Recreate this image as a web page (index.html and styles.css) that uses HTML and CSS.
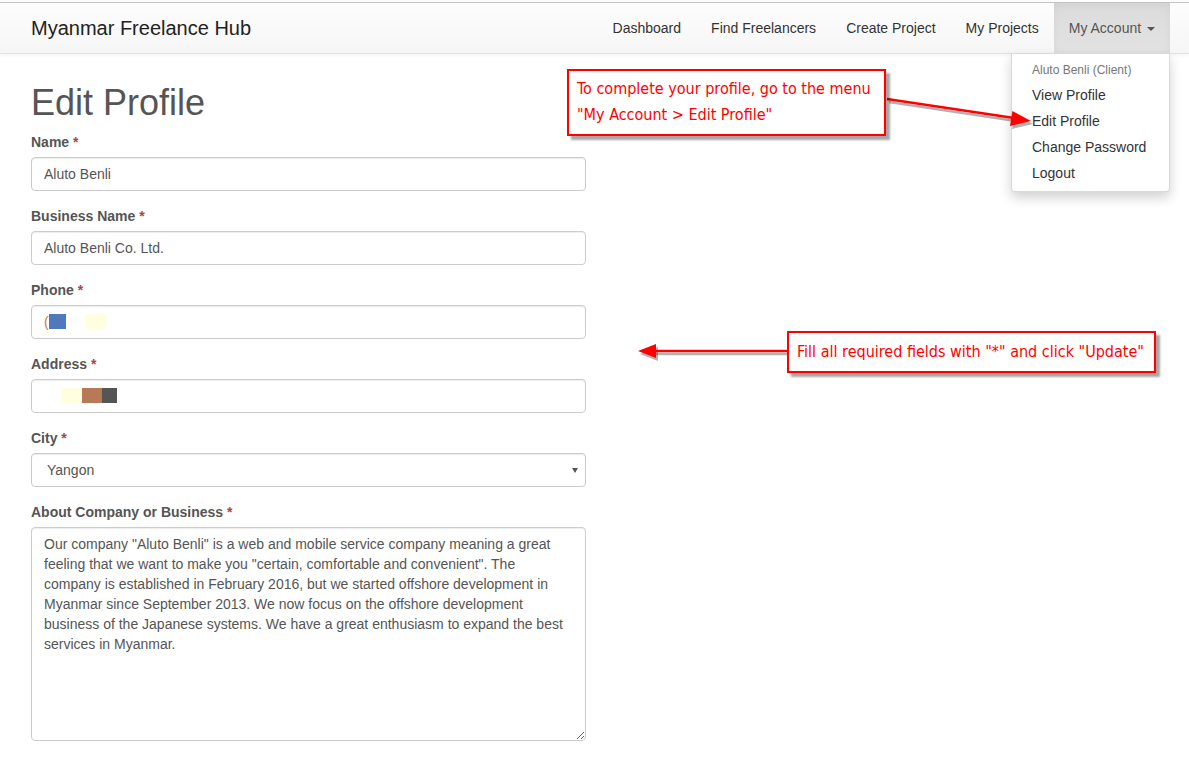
FILE: index.html
```html
<!DOCTYPE html>
<html lang="en">
<head>
<meta charset="utf-8">
<title>Edit Profile - Myanmar Freelance Hub</title>
<link rel="stylesheet" href="styles.css">
</head>
<body>
<nav class="navbar">
  <a class="brand" href="#">Myanmar Freelance Hub</a>
  <ul class="nav">
    <li><a href="#">Dashboard</a></li>
    <li><a href="#">Find Freelancers</a></li>
    <li><a href="#">Create Project</a></li>
    <li><a href="#">My Projects</a></li>
    <li class="dropdown">
      <a href="#" class="active">My Account <span class="caret"></span></a>
      <ul class="dropdown-menu">
        <li class="dropdown-header">Aluto Benli (Client)</li>
        <li><a href="#">View Profile</a></li>
        <li><a href="#">Edit Profile</a></li>
        <li><a href="#">Change Password</a></li>
        <li><a href="#">Logout</a></li>
      </ul>
    </li>
  </ul>
</nav>

<main class="container">
  <h1>Edit Profile</h1>
  <form class="profile-form">
    <div class="form-group">
      <label>Name <span class="req">*</span></label>
      <input class="form-control" type="text" value="Aluto Benli">
    </div>
    <div class="form-group">
      <label>Business Name <span class="req">*</span></label>
      <input class="form-control" type="text" value="Aluto Benli Co. Ltd.">
    </div>
    <div class="form-group">
      <label>Phone <span class="req">*</span></label>
      <div class="form-control redacted">
        <span class="paren">(</span><span class="blk blue"></span><span class="blk gap"></span><span class="blk cream"></span>
      </div>
    </div>
    <div class="form-group">
      <label>Address <span class="req">*</span></label>
      <div class="form-control redacted">
        <span class="blk lead"></span><span class="blk cream"></span><span class="blk brown"></span><span class="blk dark"></span>
      </div>
    </div>
    <div class="form-group">
      <label>City <span class="req">*</span></label>
      <div class="select-wrap">
        <select class="form-control select">
          <option>Yangon</option>
          <option>Mandalay</option>
          <option>Naypyidaw</option>
        </select>
      </div>
    </div>
    <div class="form-group">
      <label>About Company or Business <span class="req">*</span></label>
      <textarea class="form-control about">Our company "Aluto Benli" is a web and mobile service company meaning a great feeling that we want to make you "certain, comfortable and convenient". The company is established in February 2016, but we started offshore development in Myanmar since September 2013. We now focus on the offshore development business of the Japanese systems. We have a great enthusiasm to expand the best services in Myanmar.</textarea>
    </div>
  </form>
</main>

<svg class="annotations" width="1189" height="757" viewBox="0 0 1189 757" aria-hidden="true">
  <g class="shadow" transform="translate(2,3)">
    <line x1="887" y1="99" x2="1014" y2="118" stroke-width="2.5"/>
    <polygon points="1031,121 1012.4,111 1010,126"/>
    <line x1="787" y1="351" x2="652" y2="351" stroke-width="2.5"/>
    <polygon points="638,351 656,344 656,358"/>
  </g>
  <g class="arrow">
    <line x1="887" y1="99" x2="1014" y2="118" stroke-width="2.5"/>
    <polygon points="1031,121 1012.4,111 1010,126"/>
    <line x1="787" y1="351" x2="652" y2="351" stroke-width="2.5"/>
    <polygon points="638,351 656,344 656,358"/>
  </g>
</svg>

<div class="callout callout-menu">To complete your profile, go to the menu<br>"My Account &gt; Edit Profile"</div>
<div class="callout callout-fill">Fill all required fields with "*" and click "Update"</div>
</body>
</html>
```

FILE: styles.css
```css
* { box-sizing: border-box; }

html { overflow: hidden; }

body {
  margin: 0;
  padding-top: 2px;
  position: relative;
  font-family: "Liberation Sans", Arial, sans-serif;
  font-size: 14px;
  line-height: 20px;
  color: #333;
  background: #fff;
}

a { text-decoration: none; }

/* Navbar */
.navbar {
  display: flex;
  justify-content: space-between;
  height: 52px;
  padding: 0 19px 0 16px;
  border-top: 1px solid #c4c4c4;
  border-bottom: 1px solid #e2e2e2;
  background: linear-gradient(#fdfdfd, #f6f6f6);
  box-shadow: 0 1px 4px rgba(0, 0, 0, .06);
}

.brand {
  padding: 0 15px;
  line-height: 50px;
  font-size: 20px;
  color: #222;
}

.nav {
  display: flex;
  margin: 0;
  padding: 0;
  list-style: none;
}

.nav > li { position: relative; }

.nav > li > a {
  display: block;
  padding: 15px 15px;
  line-height: 20px;
  color: #333;
}

.nav > li > a.active {
  color: #555;
  background: linear-gradient(#dcdcdc, #e2e2e2);
  box-shadow: inset 0 3px 9px rgba(0, 0, 0, .05);
}

.caret {
  display: inline-block;
  width: 0;
  height: 0;
  margin-left: 2px;
  vertical-align: middle;
  border-top: 4px solid #555;
  border-left: 4px solid transparent;
  border-right: 4px solid transparent;
}

.dropdown-menu {
  position: absolute;
  top: 100%;
  right: 0;
  z-index: 5;
  min-width: 159px;
  margin: 0;
  padding: 5px 0;
  list-style: none;
  background: #fff;
  border: 1px solid rgba(0, 0, 0, .15);
  border-radius: 0 0 4px 4px;
  box-shadow: 0 6px 12px rgba(0, 0, 0, .175);
}

.dropdown-header {
  padding: 3px 20px;
  font-size: 12px;
  line-height: 17px;
  color: #777;
}

.dropdown-menu a {
  display: block;
  padding: 3px 20px;
  line-height: 20px;
  color: #333;
  white-space: nowrap;
}

/* Content */
.container {
  padding: 0 31px;
}

h1 {
  margin: 29px 0 9px;
  font-size: 36px;
  line-height: 1.1;
  font-weight: normal;
  color: #555;
}

.profile-form { width: 555px; }

.form-group { margin-bottom: 15px; }

label {
  display: block;
  margin-bottom: 5px;
  font-weight: bold;
  color: #555;
}

.req { color: #a94442; }

.form-control {
  display: block;
  width: 100%;
  height: 34px;
  padding: 6px 12px;
  font: inherit;
  line-height: 20px;
  color: #555;
  background: #fff;
  border: 1px solid #ccc;
  border-radius: 4px;
  box-shadow: inset 0 1px 1px rgba(0, 0, 0, .075);
}

.redacted {
  display: flex;
  align-items: center;
}

.blk {
  display: block;
  width: 20px;
  height: 15px;
}

.paren {
  color: #c87a3c;
  line-height: 16px;
}

.blue { background: #5078bd; width: 17px; }
.gap { background: transparent; }
.cream { background: #ffffe0; }
.brown { background: #b87a56; }
.dark { background: #555; width: 15px; }
.lead { width: 18px; }

.select-wrap { position: relative; }

.select {
  appearance: none;
  -webkit-appearance: none;
  padding-left: 15px;
}

.select-wrap::after {
  content: "";
  position: absolute;
  right: 8px;
  top: 15px;
  border-top: 5px solid #555;
  border-left: 3px solid transparent;
  border-right: 3px solid transparent;
}

.about {
  height: 214px;
  resize: vertical;
}

/* Annotations */
.annotations {
  position: absolute;
  top: 0;
  left: 0;
  pointer-events: none;
  z-index: 10;
}

.annotations .arrow line { stroke: #f00; }
.annotations .arrow polygon { fill: #f00; }
.annotations .shadow line { stroke: rgba(0, 0, 0, .3); }
.annotations .shadow polygon { fill: rgba(0, 0, 0, .3); }

.callout {
  position: absolute;
  z-index: 11;
  background: #fff;
  border: 2px solid #f00;
  color: #f00;
  font-family: "DejaVu Sans Condensed", "DejaVu Sans", sans-serif;
  font-size: 16px;
  box-shadow: 4px 4px 2px rgba(0, 0, 0, .35);
}

.callout-menu {
  left: 567px;
  top: 69px;
  width: 319px;
  height: 67px;
  padding: 5px 8px;
  line-height: 26px;
}

.callout-fill {
  left: 787px;
  top: 331px;
  width: 369px;
  height: 42px;
  padding: 9px 8px;
  line-height: 20px;
}
```
